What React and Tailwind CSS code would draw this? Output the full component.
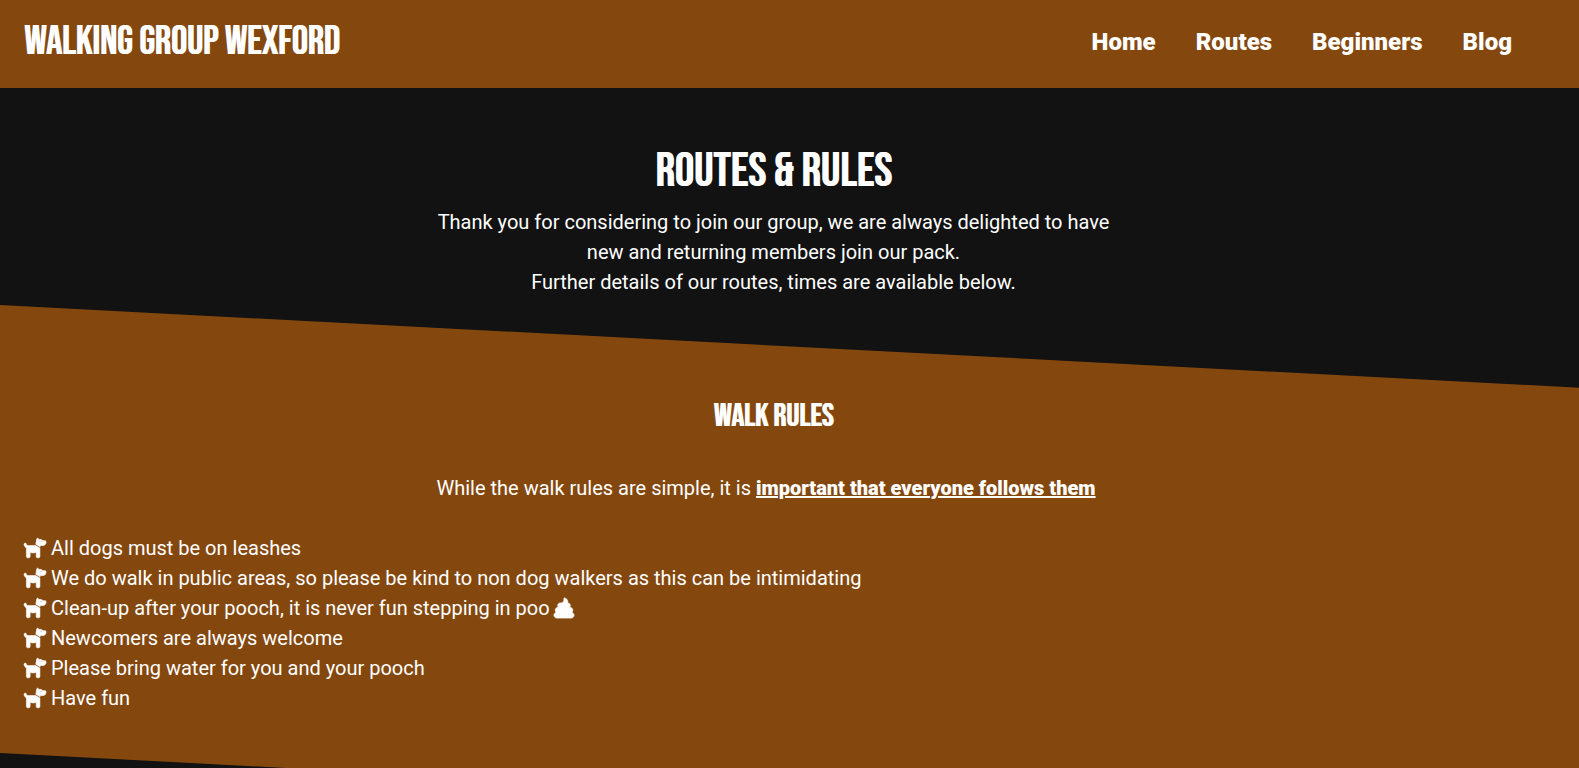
import { FaDog } from "react-icons/fa6";

const links = ["Home", "Routes", "Beginners", "Blog"];

const rules = [
  { text: "All dogs must be on leashes" },
  { text: "We do walk in public areas, so please be kind to non dog walkers as this can be intimidating" },
  { text: "Clean-up after your pooch, it is never fun stepping in poo", poo: true },
  { text: "Newcomers are always welcome" },
  { text: "Please bring water for you and your pooch" },
  { text: "Have fun" },
];

const display = "font-['Bebas_Neue','Liberation_Sans_Narrow',sans-serif] font-normal uppercase [text-shadow:1px_0_0_#fff]";

function Poo() {
  return (
    <svg
      viewBox="0 0 512 512"
      fill="currentColor"
      stroke="currentColor"
      strokeWidth="20"
      className="ml-1 inline size-5 overflow-visible align-[-3px]"
      aria-hidden="true"
    >
      <path d="M254.4 6.6c3.5-4.3 9-6.5 14.5-5.7C315.8 7.2 352 47.4 352 96c0 11.2-1.9 22-5.5 32H352c35.3 0 64 28.7 64 64c0 19.1-8.4 36.3-21.7 48H408c39.8 0 72 32.2 72 72c0 23.2-11 43.8-28 57c34.1 5.7 60 35.3 60 71c0 39.8-32.2 72-72 72H72c-39.8 0-72-32.2-72-72c0-35.7 25.9-65.3 60-71c-17-13.2-28-33.8-28-57c0-39.8 32.2-72 72-72h13.7C104.4 228.3 96 211.1 96 192c0-35.3 28.7-64 64-64h16.2c44.1-.1 79.8-35.9 79.8-80c0-9.2-1.5-17.9-4.3-26.1c-1.8-5.2-.8-11.1 2.8-15.4z" />
    </svg>
  );
}

export default function App() {
  return (
    <div className="min-h-screen overflow-hidden bg-[#121212] font-['Roboto',sans-serif] text-xl leading-[30px] text-white">
      <header className="flex items-start justify-between bg-[#84480f] pt-3 pr-[67px] pb-4 pl-6">
        <a href="#home" className={`${display} text-[40px] leading-[60px]`}>
          Walking Group Wexford
        </a>
        <nav className="flex gap-10 text-2xl leading-[60px] font-black">
          {links.map((label) => (
            <a key={label} href={`#${label.toLowerCase()}`}>
              {label}
            </a>
          ))}
        </nav>
      </header>

      <main>
        <section className="flex flex-col items-center pt-14 pr-14 pb-2 pl-6 text-center">
          <h1 className={`${display} mb-2 text-[48px] leading-[55px]`}>Routes &amp; Rules</h1>
          <p className="w-[674px] max-w-full">
            Thank you for considering to join our group, we are always delighted to have new and returning members
            join our pack.
            <br />
            Further details of our routes, times are available below.
          </p>
        </section>

        <section className="relative isolate flex flex-col pt-20 pr-14 pb-10 pl-6 before:absolute before:inset-0 before:-z-10 before:origin-top-left before:skew-y-3 before:bg-[#84480f]">
          <h2 className={`${display} mb-6 text-center text-[32px] leading-[64px]`}>Walk Rules</h2>
          <p className="mx-auto mb-[30px] w-[674px] max-w-full">
            While the walk rules are simple, it is{" "}
            <strong className="font-black underline">important that everyone follows them</strong>
          </p>
          <ul>
            {rules.map(({ text, poo }) => (
              <li key={text}>
                <FaDog
                  className="mr-[5px] inline h-5 w-[22px] overflow-visible align-[-3px]"
                  stroke="currentColor"
                  strokeWidth="16"
                  aria-hidden="true"
                />
                {text}
                {poo && <Poo />}
              </li>
            ))}
          </ul>
        </section>
      </main>
    </div>
  );
}
